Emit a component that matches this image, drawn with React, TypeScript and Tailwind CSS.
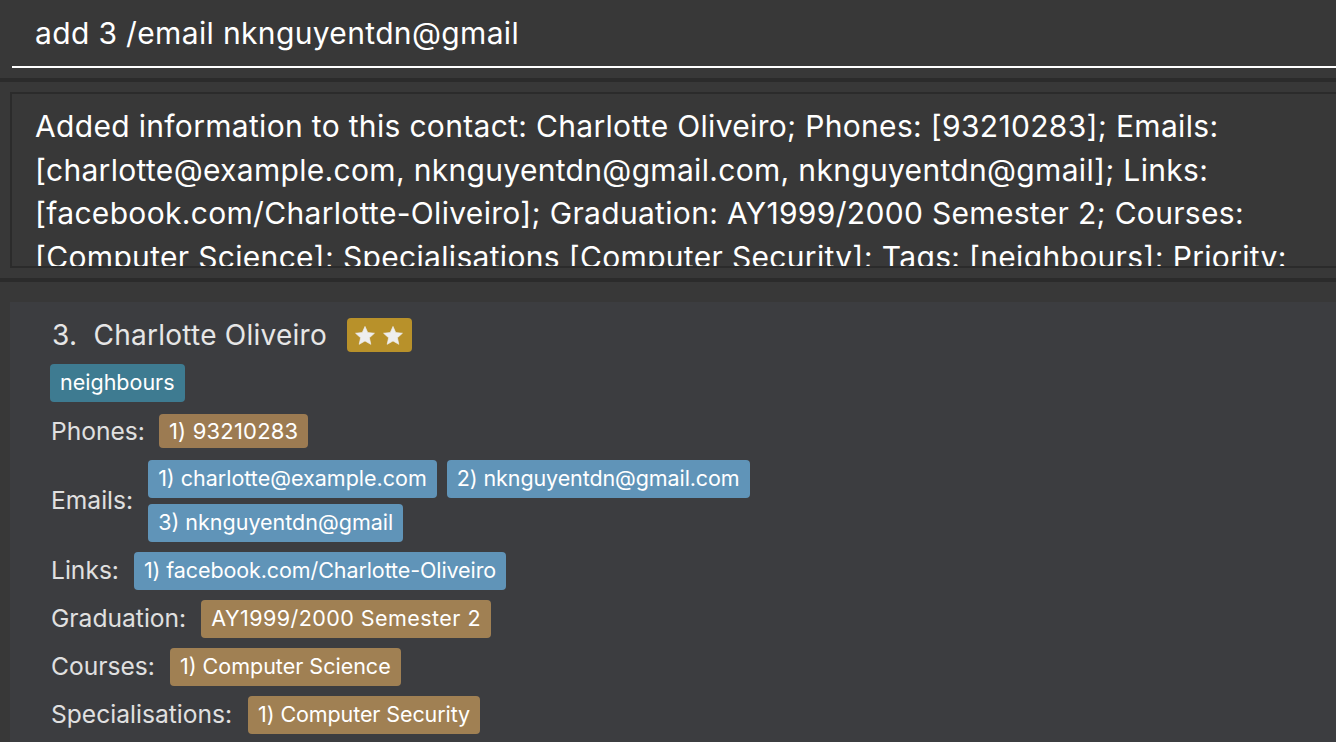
import React from "react";

const Chip = ({ children, color, h = "h-[38px]", text = "text-[21.5px]" }: { children: React.ReactNode; color: string; h?: string; text?: string }) => (
  <span className={`inline-flex items-center ${h} px-[10px] rounded-[4px] text-white ${text} leading-none whitespace-nowrap ${color}`}>
    {children}
  </span>
);

const Star = () => (
  <svg width="20" height="19" viewBox="0 0 24 23" className="block">
    <path
      d="M12 0.5L15.29 7.97L23.41 8.79L17.33 14.23L19.05 22.21L12 18.1L4.95 22.21L6.67 14.23L0.59 8.79L8.71 7.97Z"
      fill="#eeeeee"
      stroke="#eeeeee"
      strokeWidth="0.8"
      strokeLinejoin="round"
    />
  </svg>
);

export default function App() {
  const lines = [
    "Added information to this contact: Charlotte Oliveiro; Phones: [93210283]; Emails:",
    "[charlotte@example.com, nknguyentdn@gmail.com, nknguyentdn@gmail]; Links:",
    "[facebook.com/Charlotte-Oliveiro]; Graduation: AY1999/2000 Semester 2; Courses:",
    "[Computer Science]; Specialisations [Computer Security]; Tags: [neighbours]; Priority:",
  ];
  return (
    <div className="w-[1336px] h-[742px] overflow-hidden bg-[#383838] font-['Inter',sans-serif] text-white flex flex-col">
      {/* command box */}
      <div className="h-[78px] shrink-0 pl-[12px]">
        <div className="h-[68px] border-b-2 border-white flex items-center pl-[23px] pt-[1px] text-[30px] tracking-[0.35px] text-white">
          add 3 /email nknguyentdn@gmail
        </div>
      </div>
      <div className="h-[4px] shrink-0 bg-[#2b2b2b]" />
      {/* result box */}
      <div className="h-[196px] shrink-0 pt-[10px] pl-[10px]">
        <div className="h-[176px] border-2 border-r-0 border-[#2b2b2b] bg-[#383838] overflow-hidden pl-[23px] pt-[11px]">
          {lines.map((l, i) => (
            <div key={i} className="h-[43.7px] leading-[43.7px] text-[30px] tracking-[0.32px] whitespace-nowrap text-white">
              {l}
            </div>
          ))}
        </div>
      </div>
      <div className="h-[4px] shrink-0 bg-[#2b2b2b]" />
      {/* list */}
      <div className="flex-1 pt-[20px] pl-[10px]">
        <div className="h-full bg-[#3c3d40] pl-[40px] pt-[15px] flex flex-col">
          <div className="flex items-center h-[36px]">
            <span className="text-[28px] text-[#e6e6e6] tracking-[0.25px] whitespace-pre pl-[2px]">3.  Charlotte Oliveiro</span>
            <span className="ml-[20px] inline-flex items-center justify-center gap-[8px] w-[65px] h-[34px] rounded-[4px] bg-[#b8912a]">
              <Star />
              <Star />
            </span>
          </div>
          <div className="mt-[11px] flex">
            <Chip color="bg-[#3e7b91]" h="h-[38px]">neighbours</Chip>
          </div>
          <div className="mt-[11px] flex items-center gap-[14px]">
            <span className="text-[24.6px] text-[#e0e0e0] pl-[1px]">Phones:</span>
            <Chip color="bg-[#9c7b52]" h="h-[34px]" text="text-[22px] tracking-[0.2px] text-[#f0f0f0]">1) 93210283</Chip>
          </div>
          <div className="mt-[10px] flex items-center gap-[15px]">
            <span className="text-[24.6px] text-[#e0e0e0] pl-[1px]">Emails:</span>
            <div className="flex flex-wrap gap-x-[10px] gap-y-[6px] w-[620px]">
              <Chip color="bg-[#6094b8]">1) charlotte@example.com</Chip>
              <Chip color="bg-[#6094b8]" text="text-[21.5px] tracking-[-0.1px]">2) nknguyentdn@gmail.com</Chip>
              <Chip color="bg-[#6094b8]">3) nknguyentdn@gmail</Chip>
            </div>
          </div>
          <div className="mt-[10px] flex items-center gap-[15px]">
            <span className="text-[24.6px] text-[#e0e0e0] pl-[1px]">Links:</span>
            <Chip color="bg-[#6094b8]" text="text-[21.5px] tracking-[-0.1px]">1) facebook.com/Charlotte-Oliveiro</Chip>
          </div>
          <div className="mt-[10px] flex items-center gap-[15px]">
            <span className="text-[24.6px] text-[#e0e0e0] pl-[1px]">Graduation:</span>
            <Chip color="bg-[#a08053]" text="text-[21.5px] tracking-[0.45px]">AY1999/2000 Semester 2</Chip>
          </div>
          <div className="mt-[10px] flex items-center gap-[15px]">
            <span className="text-[24.6px] text-[#e0e0e0] pl-[1px]">Courses:</span>
            <Chip color="bg-[#a08053]">1) Computer Science</Chip>
          </div>
          <div className="mt-[10px] flex items-center gap-[16px]">
            <span className="text-[24.6px] text-[#e0e0e0] pl-[1px]">Specialisations:</span>
            <Chip color="bg-[#a08053]" text="text-[21.5px] tracking-[-0.1px]">1) Computer Security</Chip>
          </div>
        </div>
      </div>
    </div>
  );
}
